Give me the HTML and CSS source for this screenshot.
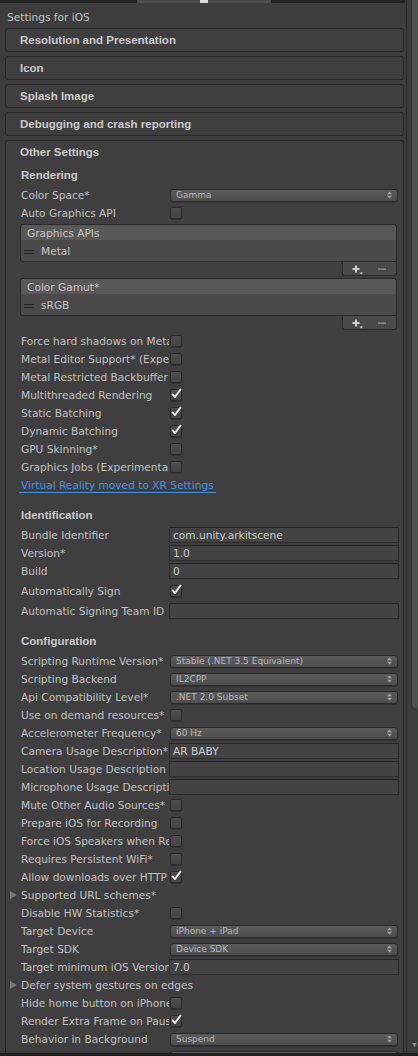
FILE: index.html
```html
<!DOCTYPE html>
<html lang="en">
<head>
  <meta charset="UTF-8"/>
  <title>Player Settings – iOS</title>
  <link rel="stylesheet" href="styles.css">
</head>
<body>
  <div class="window">
    <div class="inspector">
      <div class="tabs"><span class="tab"><span class="tab-grip"></span></span></div>
      <div class="platform">Settings for iOS</div>

      <div class="foldout"><div class="foldout-head">Resolution and Presentation</div></div>
      <div class="foldout"><div class="foldout-head">Icon</div></div>
      <div class="foldout"><div class="foldout-head">Splash Image</div></div>
      <div class="foldout"><div class="foldout-head">Debugging and crash reporting</div></div>

      <div class="foldout open">
        <div class="foldout-head">Other Settings</div>

        <!-- Rendering -->
        <div class="group-title first">Rendering</div>
        <div class="field"><span class="label">Color Space*</span><span class="popup">Gamma<svg class="updown" width="5" height="8" viewBox="0 0 5 8"><path d="M0 3.2L2.5 0.5 5 3.2zM0 4.8L2.5 7.5 5 4.8z"/></svg></span></div>
        <div class="field"><span class="label">Auto Graphics API</span><span class="check"></span></div>

        <div class="list">
          <div class="list-head">Graphics APIs</div>
          <div class="list-body"><span class="handle"></span>Metal</div>
          <div class="list-foot">
            <svg width="53" height="13" viewBox="0 0 53 13">
              <path class="plus" d="M9.5 6h7v2h-7zM12 3.5h2v7h-2z"/>
              <path class="plus" d="M16.5 10.5h3.5l-1.75 2z"/>
              <path class="minus" d="M35 6.5h8v1.2h-8z"/>
            </svg>
          </div>
        </div>

        <div class="list">
          <div class="list-head">Color Gamut*</div>
          <div class="list-body"><span class="handle"></span>sRGB</div>
          <div class="list-foot">
            <svg width="53" height="13" viewBox="0 0 53 13">
              <path class="plus" d="M9.5 6h7v2h-7zM12 3.5h2v7h-2z"/>
              <path class="plus" d="M16.5 10.5h3.5l-1.75 2z"/>
              <path class="minus" d="M35 6.5h8v1.2h-8z"/>
            </svg>
          </div>
        </div>

        <div class="field after-list"><span class="label">Force hard shadows on Metal</span><span class="check"></span></div>
        <div class="field"><span class="label">Metal Editor Support* (Experimental)</span><span class="check"></span></div>
        <div class="field"><span class="label">Metal Restricted Backbuffer Use</span><span class="check"></span></div>
        <div class="field"><span class="label">Multithreaded Rendering</span><span class="check on"><svg width="12" height="12" viewBox="0 0 12 12"><path d="M2.6 6.4L5 9 10.4 1.6"/></svg></span></div>
        <div class="field"><span class="label">Static Batching</span><span class="check on"><svg width="12" height="12" viewBox="0 0 12 12"><path d="M2.6 6.4L5 9 10.4 1.6"/></svg></span></div>
        <div class="field"><span class="label">Dynamic Batching</span><span class="check on"><svg width="12" height="12" viewBox="0 0 12 12"><path d="M2.6 6.4L5 9 10.4 1.6"/></svg></span></div>
        <div class="field"><span class="label">GPU Skinning*</span><span class="check"></span></div>
        <div class="field"><span class="label">Graphics Jobs (Experimental)*</span><span class="check"></span></div>
        <div class="link-row"><span class="link">Virtual Reality moved to XR Settings</span></div>

        <!-- Identification -->
        <div class="group-title">Identification</div>
        <div class="field"><span class="label">Bundle Identifier</span><span class="text">com.unity.arkitscene</span></div>
        <div class="field"><span class="label">Version*</span><span class="text">1.0</span></div>
        <div class="field"><span class="label">Build</span><span class="text">0</span></div>
        <div class="field spaced"><span class="label">Automatically Sign</span><span class="check on"><svg width="12" height="12" viewBox="0 0 12 12"><path d="M2.6 6.4L5 9 10.4 1.6"/></svg></span></div>
        <div class="field spaced"><span class="label">Automatic Signing Team ID</span><span class="text"></span></div>

        <!-- Configuration -->
        <div class="group-title">Configuration</div>
        <div class="field"><span class="label">Scripting Runtime Version*</span><span class="popup">Stable (.NET 3.5 Equivalent)<svg class="updown" width="5" height="8" viewBox="0 0 5 8"><path d="M0 3.2L2.5 0.5 5 3.2zM0 4.8L2.5 7.5 5 4.8z"/></svg></span></div>
        <div class="field"><span class="label">Scripting Backend</span><span class="popup">IL2CPP<svg class="updown" width="5" height="8" viewBox="0 0 5 8"><path d="M0 3.2L2.5 0.5 5 3.2zM0 4.8L2.5 7.5 5 4.8z"/></svg></span></div>
        <div class="field"><span class="label">Api Compatibility Level*</span><span class="popup">.NET 2.0 Subset<svg class="updown" width="5" height="8" viewBox="0 0 5 8"><path d="M0 3.2L2.5 0.5 5 3.2zM0 4.8L2.5 7.5 5 4.8z"/></svg></span></div>
        <div class="field"><span class="label">Use on demand resources*</span><span class="check"></span></div>
        <div class="field"><span class="label">Accelerometer Frequency*</span><span class="popup">60 Hz<svg class="updown" width="5" height="8" viewBox="0 0 5 8"><path d="M0 3.2L2.5 0.5 5 3.2zM0 4.8L2.5 7.5 5 4.8z"/></svg></span></div>
        <div class="field"><span class="label">Camera Usage Description*</span><span class="text">AR BABY</span></div>
        <div class="field"><span class="label">Location Usage Description</span><span class="text"></span></div>
        <div class="field"><span class="label">Microphone Usage Description</span><span class="text"></span></div>
        <div class="field"><span class="label">Mute Other Audio Sources*</span><span class="check"></span></div>
        <div class="field"><span class="label">Prepare iOS for Recording</span><span class="check"></span></div>
        <div class="field"><span class="label">Force iOS Speakers when Recording</span><span class="check"></span></div>
        <div class="field"><span class="label">Requires Persistent WiFi*</span><span class="check"></span></div>
        <div class="field"><span class="label">Allow downloads over HTTP</span><span class="check on"><svg width="12" height="12" viewBox="0 0 12 12"><path d="M2.6 6.4L5 9 10.4 1.6"/></svg></span></div>
        <div class="field fold"><svg class="arrow" width="7" height="8" viewBox="0 0 7 8"><path d="M0 0L7 4 0 8z"/></svg><span class="label wide">Supported URL schemes*</span></div>
        <div class="field"><span class="label">Disable HW Statistics*</span><span class="check"></span></div>
        <div class="field"><span class="label">Target Device</span><span class="popup">iPhone + iPad<svg class="updown" width="5" height="8" viewBox="0 0 5 8"><path d="M0 3.2L2.5 0.5 5 3.2zM0 4.8L2.5 7.5 5 4.8z"/></svg></span></div>
        <div class="field"><span class="label">Target SDK</span><span class="popup">Device SDK<svg class="updown" width="5" height="8" viewBox="0 0 5 8"><path d="M0 3.2L2.5 0.5 5 3.2zM0 4.8L2.5 7.5 5 4.8z"/></svg></span></div>
        <div class="field"><span class="label">Target minimum iOS Version</span><span class="text">7.0</span></div>
        <div class="field fold"><svg class="arrow" width="7" height="8" viewBox="0 0 7 8"><path d="M0 0L7 4 0 8z"/></svg><span class="label wide">Defer system gestures on edges</span></div>
        <div class="field"><span class="label">Hide home button on iPhone X</span><span class="check"></span></div>
        <div class="field"><span class="label">Render Extra Frame on Pause</span><span class="check on"><svg width="12" height="12" viewBox="0 0 12 12"><path d="M2.6 6.4L5 9 10.4 1.6"/></svg></span></div>
        <div class="field"><span class="label">Behavior in Background</span><span class="popup">Suspend<svg class="updown" width="5" height="8" viewBox="0 0 5 8"><path d="M0 3.2L2.5 0.5 5 3.2zM0 4.8L2.5 7.5 5 4.8z"/></svg></span></div>
        <div class="field"><span class="label">Architecture</span><span class="popup">Universal<svg class="updown" width="5" height="8" viewBox="0 0 5 8"><path d="M0 3.2L2.5 0.5 5 3.2zM0 4.8L2.5 7.5 5 4.8z"/></svg></span></div>
      </div>
    </div>

    <div class="scrollbar">
      <div class="thumb"></div>
      <svg class="scroll-down" width="5" height="4" viewBox="0 0 5 4"><path d="M0 0h5L2.5 4z"/></svg>
    </div>
  </div>
  <div class="statusbar"></div>
</body>
</html>
```

FILE: styles.css
```css
* { box-sizing:border-box; margin:0; padding:0 }
html, body {
  width:100%; height:100%; overflow:hidden;
  background:#3d3d3d; color:#c2c2c2;
  font-family:'DejaVu Sans', sans-serif; font-size:10.6px;
}
body { display:flex; flex-direction:column }

.window { flex:1; display:flex; min-height:0; overflow:hidden }
.inspector { width:405px; flex:none; overflow:hidden }
.statusbar { height:3px; flex:none; background:#1f1f1f }

/* window tab strip */
.tabs { height:3px; background:#232323; padding-left:137px; display:flex; margin-right:-3px }
.tab { width:134px; background:#4d4d4d; padding-left:63px }
.tab-grip { display:block; width:8px; height:3px; background:#dcdcdc }

.platform { height:25px; line-height:24px; padding:2px 0 0 7px; color:#c4c4c4 }

/* foldout boxes */
.foldout {
  margin:0 1px 4px 5px;
  border:1px solid #282828; border-radius:3px;
  background:#3f3f3f;
}
.foldout-head {
  height:22px; line-height:22px; padding-left:14px;
  font-family:'Liberation Sans', sans-serif; font-weight:bold; font-size:11.5px;
  color:#cacaca;
}
.foldout.open { border-bottom:none; border-radius:3px 3px 0 0; margin-bottom:0 }

.group-title {
  height:18px; line-height:19px; padding-left:15px; margin:12px 0 2px;
  font-family:'Liberation Sans', sans-serif; font-weight:bold; font-size:11.5px;
  color:#cacaca;
}
.group-title.first { margin-top:3px }

/* property rows */
.field { display:flex; align-items:center; height:18px; padding:0 5px 0 15px }
.field.spaced { margin-top:2px }
.field.after-list { margin-top:2px }
.label {
  width:148px; flex:none; line-height:18px;
  white-space:nowrap; overflow:hidden;
}
.label.wide { width:auto }
.fold { padding-left:4px }
.fold .arrow { flex:none; margin-right:4px; fill:#777 }

.popup {
  flex:1; height:13px; margin-left:1px;
  display:flex; align-items:center; justify-content:space-between;
  padding:0 5px 0 5px;
  border:1px solid #2a2a2a; border-radius:3px;
  background:linear-gradient(#5b5b5b, #4d4d4d);
  box-shadow:0 1px 0 rgba(0,0,0,.18);
  font-size:9px; color:#b8b8b8; line-height:11px;
}
.updown { fill:#a8a8a8; flex:none }

.text {
  flex:1; height:16px; margin-right:-1px; line-height:15px;
  padding:0 0 0 3px;
  border:1px solid #2c2c2c; border-top-color:#232323;
  background:#434343; color:#cbcbcb;
  white-space:nowrap; overflow:hidden;
}

.check {
  flex:none; width:12px; height:12px; margin-left:1px;
  border:1px solid #2a2a2a; border-radius:2px;
  background:linear-gradient(#4d4d4d, #444);
  box-shadow:0 1px 0 rgba(0,0,0,.2);
  position:relative;
}
.check svg { position:absolute; left:-1px; top:-2px; overflow:visible }
.check path { fill:none; stroke:#e8e8e8; stroke-width:1.9; stroke-linecap:round; stroke-linejoin:round }

/* reorderable lists */
.list { display:flex; flex-direction:column; margin:2px 6px 0 14px }
.list-head {
  height:16px; line-height:16px; padding-left:6px;
  border:1px solid #2a2a2a; border-bottom:none; border-radius:3px 3px 0 0;
  background:#585858; color:#c6c6c6;
}
.list-body {
  height:22px; display:flex; align-items:center;
  border:1px solid #2a2a2a; border-top:none; border-radius:0 0 0 3px;
  background:#4a4a4a; color:#c6c6c6;
}
.handle {
  width:10px; height:4px; margin:2px 7px 0 3px;
  border-top:1px solid #222; border-bottom:1px solid #222;
}
.list-foot {
  align-self:flex-end; width:55px; height:14px;
  border:1px solid #2a2a2a; border-top:none; border-radius:0 0 3px 3px;
  background:#4a4a4a;
}
.list-foot svg { display:block }
.list-foot .plus { fill:#d0d0d0 }
.list-foot .minus { fill:#9a9a9a }

.link-row { height:18px; padding:1px 0 0 13px }
.link {
  display:inline-block; height:16px; line-height:16px; padding:0 2px;
  color:#4f8fe0; border-bottom:1px solid #4f8fe0;
}

/* scroll bar */
.scrollbar {
  flex:1; display:flex; flex-direction:column; align-items:flex-end;
  justify-content:space-between;
  margin-left:1px; border-left:1px solid #2a2a2a;
}
.thumb {
  width:7px; height:708px;
  border-left:1px solid #2e2e2e; border-radius:0 0 0 4px;
  background:#515151;
}
.scroll-down { fill:#8a8a8a; margin:0 1px 6px 0 }
```
